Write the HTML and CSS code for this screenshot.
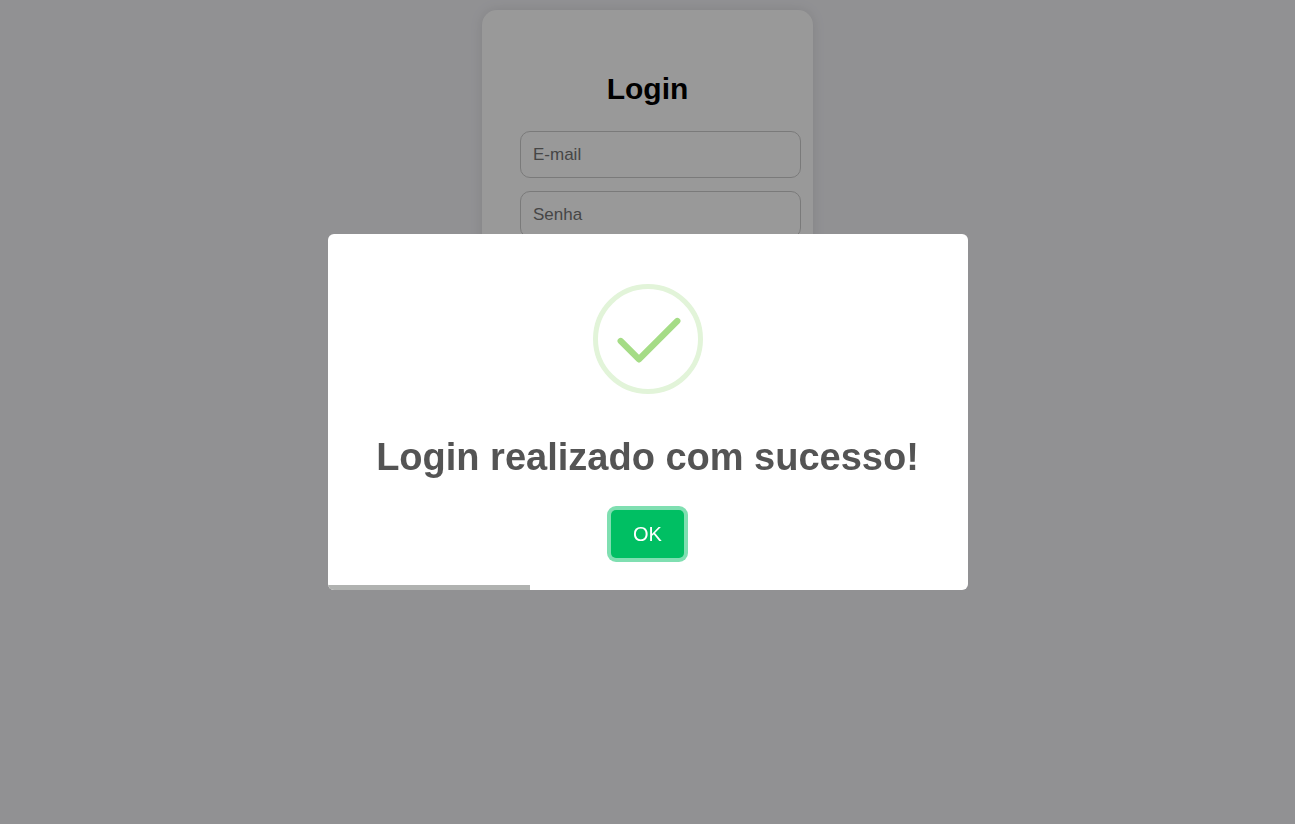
FILE: index.html
```html
<!DOCTYPE html>
<html lang="pt-BR">
<head>
<meta charset="utf-8">
<meta name="viewport" content="width=device-width, initial-scale=1">
<title>Login</title>
<link rel="stylesheet" href="styles.css">
</head>
<body>
<main class="card">
  <h1 class="card-title">Login</h1>
  <form class="form">
    <input class="field" type="email" placeholder="E-mail" aria-label="E-mail">
    <input class="field" type="password" placeholder="Senha" aria-label="Senha">
  </form>
</main>
<div class="overlay">
  <div class="modal" role="dialog" aria-modal="true" aria-labelledby="modal-title">
    <svg class="modal-icon" viewBox="0 0 110 110" fill="none" aria-hidden="true">
      <circle cx="55" cy="55" r="52.5" stroke="#e2f4d9" stroke-width="5"/>
      <path d="M27.7 57L46 75.300L84.300 37" stroke="#a5dc86" stroke-width="6.3" stroke-linecap="round" stroke-linejoin="round"/>
    </svg>
    <h2 class="modal-title" id="modal-title">Login realizado com sucesso!</h2>
    <button class="confirm" type="button">OK</button>
    <div class="timer"></div>
  </div>
</div>
</body>
</html>
```
FILE: styles.css
```css
body {
  margin: 0;
  padding: 10px;
  background: #f2f2f6;
  font-family: "Liberation Sans", Arial, sans-serif;
}

.card {
  width: 255px;
  margin: 0 auto;
  padding: 38px;
  border-radius: 15px;
  background: #fff;
  box-shadow: 0 0 13px rgba(0, 0, 0, 0.1);
}

.card-title {
  margin: 23px 0 25px;
  font-size: 30px;
  line-height: 35px;
  text-align: center;
}

.form {
  display: flex;
  flex-direction: column;
  gap: 13px;
}

.field {
  box-sizing: content-box;
  width: 100%;
  height: 21px;
  padding: 12px;
  border: 1px solid #ccc;
  border-radius: 10px;
  background: #fff;
  font: 17px "Liberation Sans", Arial, sans-serif;
}

.field::placeholder {
  color: #757575;
}

.overlay {
  position: fixed;
  inset: 0;
  display: grid;
  place-items: center;
  background: rgba(0, 0, 0, 0.4);
}

.modal {
  display: flex;
  flex-direction: column;
  align-items: center;
  box-sizing: border-box;
  width: min(640px, 100%);
  padding-top: 50px;
  border-radius: 6px;
  overflow: hidden;
  background: #fff;
}

.modal-icon {
  width: 110px;
  height: 110px;
}

.modal-title {
  margin: 42px 20px 32px;
  color: #545454;
  font-size: 38px;
  line-height: 42px;
  text-align: center;
}

.confirm {
  padding: 12px 22px;
  border: 0;
  border-radius: 5px;
  background: #00bf63;
  box-shadow: 0 0 0 4px rgba(0, 191, 99, 0.5);
  color: #fff;
  font: 20px/24px "Liberation Sans", Arial, sans-serif;
}

.timer {
  align-self: flex-start;
  width: 202px;
  height: 5px;
  margin-top: 27px;
  background: #b0b2b0;
}
```
